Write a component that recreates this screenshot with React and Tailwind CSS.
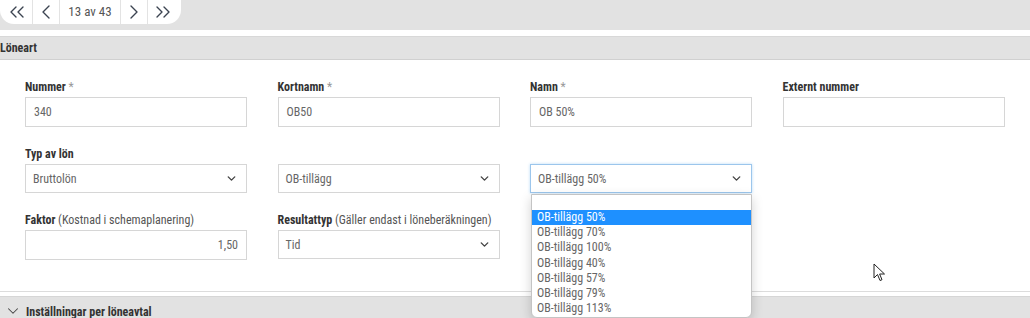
import React from "react";
import { ChevronsLeft, ChevronLeft, ChevronRight, ChevronsRight, ChevronDown } from "lucide-react";

const font = { fontFamily: '"Roboto Condensed","Liberation Sans Narrow","Arial Narrow",Roboto,sans-serif' };

function Label({ bold, rest }) {
  return (
    <div className="h-[16px] mb-[2px] text-[12px] leading-[16px] text-[#333] whitespace-nowrap">
      <span className="font-bold">{bold}</span>
      {rest && <span className="text-[#555]">{rest}</span>}
    </div>
  );
}

function Req({ text }) {
  return (
    <div className="h-[16px] mb-[2px] text-[12px] leading-[16px] text-[#333] whitespace-nowrap">
      <span className="font-bold">{text}</span>
      <span className="text-[#999]"> *</span>
    </div>
  );
}

function Input({ value, right }) {
  return (
    <div className={`h-[30px] border border-[#d6d6d6] bg-white flex items-center px-[8px] text-[12px] text-[#666] ${right ? "justify-end" : ""}`}>
      {value}
    </div>
  );
}

function Select({ value, focus }) {
  return (
    <div
      className={`h-[29px] border bg-white flex items-center justify-between pl-[7px] pr-[8px] text-[12px] text-[#666] ${
        focus ? "border-[#9cc6ec] shadow-[0_0_3px_#bcdcf7]" : "border-[#d6d6d6]"
      }`}
    >
      <span>{value}</span>
      <ChevronDown size={13} strokeWidth={2.6} className="text-[#444]" />
    </div>
  );
}

const options = ["OB-tillägg 50%", "OB-tillägg 70%", "OB-tillägg 100%", "OB-tillägg 40%", "OB-tillägg 57%", "OB-tillägg 79%", "OB-tillägg 113%"];

const grid = "grid grid-cols-[repeat(4,222px)] gap-x-[30.5px]";

export default function App() {
  return (
    <div className="w-[1030px] h-[318px] overflow-hidden bg-white relative" style={font}>
      {/* top bar */}
      <div className="h-[30px] bg-[#e2e2e2]">
        <div className="w-[181px] h-[24px] bg-white rounded-b-[14px] flex items-stretch text-[#3b4350]">
          <div className="w-[33px] flex items-center justify-center border-r border-[#e3e3e3] pl-[1px]">
            <ChevronsLeft size={24} strokeWidth={1.35} />
          </div>
          <div className="w-[27px] flex items-center justify-center border-r border-[#e3e3e3]">
            <ChevronLeft size={24} strokeWidth={1.35} />
          </div>
          <div className="w-[61px] flex items-center justify-center border-r border-[#e3e3e3] text-[13px] text-[#555]">
            13 av 43
          </div>
          <div className="w-[27px] flex items-center justify-center border-r border-[#e3e3e3]">
            <ChevronRight size={24} strokeWidth={1.35} />
          </div>
          <div className="flex-1 flex items-center justify-center pr-[3px]">
            <ChevronsRight size={24} strokeWidth={1.35} />
          </div>
        </div>
      </div>
      <div className="h-[6px] bg-white" />
      <div className="h-[24px] bg-[#e2e2e2] border-t border-[#d8d8d8] border-b border-b-[#d0d0d0] flex items-center text-[12px] font-bold text-[#333]">
        Löneart
      </div>

      {/* form */}
      <div className="pl-[25px] pt-[19px]">
        <div className={grid}>
          <div>
            <Req text="Nummer" />
            <Input value="340" />
          </div>
          <div>
            <Req text="Kortnamn" />
            <Input value="OB50" />
          </div>
          <div>
            <Req text="Namn" />
            <Input value="OB 50%" />
          </div>
          <div>
            <Label bold="Externt nummer" />
            <Input value="" />
          </div>
        </div>

        <div className={`${grid} mt-[19px]`}>
          <div>
            <Label bold="Typ av lön" />
            <Select value="Bruttolön" />
          </div>
          <div className="pt-[18px]">
            <Select value="OB-tillägg" />
          </div>
          <div className="pt-[18px] relative">
            <Select value="OB-tillägg 50%" focus />
            <div className="absolute left-[1px] right-0 top-[48px] z-10 bg-white border border-[#c4c4c4] rounded-b-[6px] shadow-[0_4px_12px_rgba(0,0,0,0.18)] text-[12px] text-[#666] leading-[15.2px] pb-[1px]">
              <div className="h-[15px]" />
              {options.map((o, i) => (
                <div key={o} className={`pl-[5px] h-[15.2px] ${i === 0 ? "bg-[#1e90ff] text-white" : ""}`}>
                  {o}
                </div>
              ))}
            </div>
          </div>
          <div />
        </div>

        <div className={`${grid} mt-[19px]`}>
          <div>
            <Label bold="Faktor" rest=" (Kostnad i schemaplanering)" />
            <Input value="1,50" right />
          </div>
          <div>
            <Label bold="Resultattyp" rest=" (Gäller endast i löneberäkningen)" />
            <Select value="Tid" />
          </div>
        </div>
      </div>

      <div className="mt-[31px] border-t border-[#dcdcdc] h-[5px]" />
      <div className="h-[30px] bg-[#e2e2e2] border-t border-[#d6d6d6] flex items-start pt-[6px] pl-[4px] text-[12px] font-bold text-[#333]">
        <ChevronDown size={18} strokeWidth={1.4} className="mt-[-1px] mr-[4px] text-[#444]" />
        Inställningar per löneavtal
      </div>

      {/* mouse cursor */}
      <svg className="absolute left-[873px] top-[263px]" width="13" height="19" viewBox="0 0 13 19">
        <path d="M1 1 L1 15 L4.5 11.5 L7 17.5 L9 16.7 L6.6 11 L11.5 11 Z" fill="white" stroke="#222" strokeWidth="1" strokeLinejoin="round" />
      </svg>
    </div>
  );
}
